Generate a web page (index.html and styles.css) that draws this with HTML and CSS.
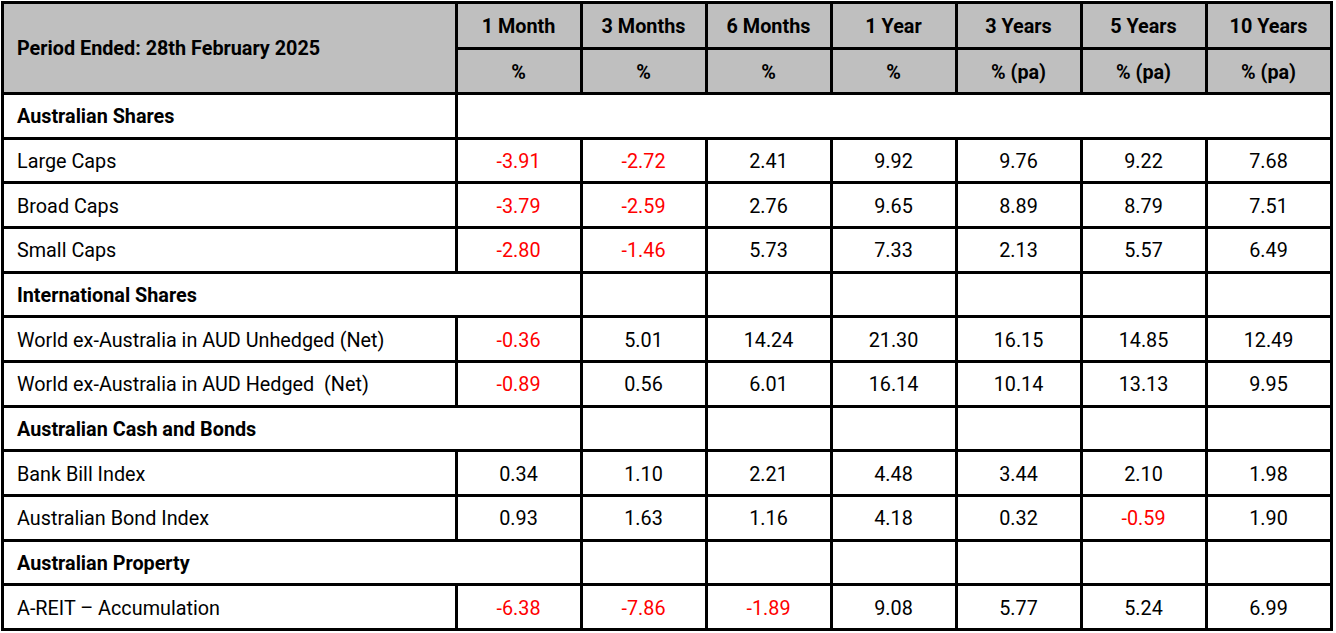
FILE: index.html
```html
<!DOCTYPE html>
<html lang="en">
<head>
<meta charset="utf-8">
<title>Performance Table</title>
<link rel="stylesheet" href="styles.css">
</head>
<body>
<table class="perf">
  <colgroup>
    <col class="c-label">
    <col class="c-num"><col class="c-num"><col class="c-num"><col class="c-num">
    <col class="c-num"><col class="c-num"><col class="c-num">
  </colgroup>
  <thead>
    <tr class="h1">
      <th rowspan="2" class="period">Period Ended: 28th February 2025</th>
      <th>1 Month</th><th>3 Months</th><th>6 Months</th><th>1 Year</th><th>3 Years</th><th>5 Years</th><th>10 Years</th>
    </tr>
    <tr class="h2">
      <th>%</th><th>%</th><th>%</th><th>%</th><th>% (pa)</th><th>% (pa)</th><th>% (pa)</th>
    </tr>
  </thead>
  <tbody>
    <tr class="sec"><td class="label">Australian Shares</td><td colspan="7"></td></tr>
    <tr><td class="label">Large Caps</td><td class="neg">-3.91</td><td class="neg">-2.72</td><td>2.41</td><td>9.92</td><td>9.76</td><td>9.22</td><td>7.68</td></tr>
    <tr><td class="label">Broad Caps</td><td class="neg">-3.79</td><td class="neg">-2.59</td><td>2.76</td><td>9.65</td><td>8.89</td><td>8.79</td><td>7.51</td></tr>
    <tr><td class="label">Small Caps</td><td class="neg">-2.80</td><td class="neg">-1.46</td><td>5.73</td><td>7.33</td><td>2.13</td><td>5.57</td><td>6.49</td></tr>
    <tr class="sec"><td class="label" colspan="2">International Shares</td><td></td><td></td><td></td><td></td><td></td><td></td></tr>
    <tr><td class="label">World ex-Australia in AUD Unhedged (Net)</td><td class="neg">-0.36</td><td>5.01</td><td>14.24</td><td>21.30</td><td>16.15</td><td>14.85</td><td>12.49</td></tr>
    <tr><td class="label">World ex-Australia in AUD Hedged &nbsp;(Net)</td><td class="neg">-0.89</td><td>0.56</td><td>6.01</td><td>16.14</td><td>10.14</td><td>13.13</td><td>9.95</td></tr>
    <tr class="sec"><td class="label" colspan="2">Australian Cash and Bonds</td><td></td><td></td><td></td><td></td><td></td><td></td></tr>
    <tr><td class="label">Bank Bill Index</td><td>0.34</td><td>1.10</td><td>2.21</td><td>4.48</td><td>3.44</td><td>2.10</td><td>1.98</td></tr>
    <tr><td class="label">Australian Bond Index</td><td>0.93</td><td>1.63</td><td>1.16</td><td>4.18</td><td>0.32</td><td class="neg">-0.59</td><td>1.90</td></tr>
    <tr class="sec"><td class="label" colspan="2">Australian Property</td><td></td><td></td><td></td><td></td><td></td><td></td></tr>
    <tr><td class="label">A-REIT – Accumulation</td><td class="neg">-6.38</td><td class="neg">-7.86</td><td class="neg">-1.89</td><td>9.08</td><td>5.77</td><td>5.24</td><td>6.99</td></tr>
  </tbody>
</table>
</body>
</html>
```

FILE: styles.css
```css
html, body {
  margin: 0;
  padding: 0;
  background: #ffffff;
}

body {
  padding: 1px 0 0 1px;
  font-family: Roboto, "Liberation Sans", Arial, sans-serif;
  font-size: 19.8px;
  color: #000000;
}

.perf {
  border-collapse: collapse;
  table-layout: fixed;
  width: 1331.5px;
}

.c-label { width: 453.5px; }
.c-num { width: 125px; }

.perf th,
.perf td {
  border: 3px solid #000000;
  padding: 2px 0 0 0;
  text-align: center;
  vertical-align: middle;
  white-space: nowrap;
  overflow: hidden;
}

.perf thead th {
  background: #bfbfbf;
  font-weight: 700;
}

.perf .h1 { height: 46px; }
.perf .h2 { height: 45px; }

.perf tbody tr { height: 44.66px; }

.perf th.period {
  text-align: left;
  padding-left: 13px;
  padding-top: 1px;
}

.perf td.label {
  text-align: left;
  padding-left: 13px;
}

.perf .sec td.label {
  font-weight: 700;
}

.perf td.neg {
  color: #ff0000;
}
```
